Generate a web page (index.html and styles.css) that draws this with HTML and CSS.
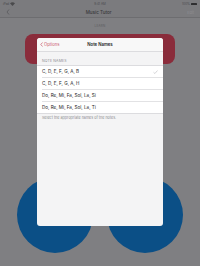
FILE: index.html
```html
<!DOCTYPE html>
<html>
<head>
<meta charset="utf-8">
<link rel="stylesheet" href="styles.css">
</head>
<body>
<div class="screen">
  <div class="status">
    <span class="st-left">iPad <svg class="wifi" width="5" height="4" viewBox="0 0 10 8"><path d="M5 8 L0 2.5 Q5 -1.5 10 2.5 Z" fill="#4a4a4c"/></svg></span>
    <span class="st-time">9:41 AM</span>
    <span class="st-right">100% <span class="batt"></span></span>
  </div>
  <div class="nav">
    <svg class="back" width="4" height="6" viewBox="0 0 4 6"><path d="M3 0.5 L1 3 L3 5.5" stroke="#5a5a5e" stroke-width="0.8" fill="none"/></svg>
    <span class="nav-title">Music Tutor</span>
    <span class="nav-edit">Edit</span>
  </div>
  <div class="content">
    <div class="learn">LEARN</div>
    <div class="banner"></div>
    <div class="circles">
      <div class="circle"></div>
      <div class="circle"></div>
    </div>
  </div>

  <div class="sheet">
    <div class="sheet-head">
      <span class="sh-back"><svg width="3" height="5" viewBox="0 0 3 5"><path d="M2.5 0.5 L0.8 2.5 L2.5 4.5" stroke="#c9566a" stroke-width="0.7" fill="none"/></svg>Options</span>
      <span class="sh-title">Note Names</span>
    </div>
    <div class="sec-head">NOTE NAMES</div>
    <div class="list">
      <div class="row">C, D, E, F, G, A, B<svg class="check" width="5" height="4" viewBox="0 0 10 8"><path d="M1 4.5 L3.8 7 L9 1" stroke="#b8b8bc" stroke-width="1.2" fill="none"/></svg></div>
      <div class="row">C, D, E, F, G, A, H</div>
      <div class="row">Do, Re, Mi, Fa, Sol, La, Si</div>
      <div class="row">Do, Re, Mi, Fa, Sol, La, Ti</div>
    </div>
    <div class="sec-foot">Select the appropriate names of the notes.</div>
  </div>
</div>
</body>
</html>
```
FILE: styles.css
```css
html, body {
  margin: 0;
  padding: 0;
}
body {
  width: 200px;
  height: 266px;
  overflow: hidden;
  background: #7f7f82;
  font-family: Inter, "Liberation Sans", sans-serif;
}
.screen {
  position: relative;
  width: 200px;
  height: 266px;
}
.status {
  height: 7px;
  display: flex;
  align-items: center;
  justify-content: space-between;
  padding: 0 3px;
  font-size: 3px;
  color: #4a4a4d;
  background: #7b7b7e;
}
.st-left, .st-right {
  display: flex;
  align-items: center;
  gap: 1px;
  width: 20px;
}
.st-right {
  justify-content: flex-end;
}
.batt {
  display: inline-block;
  width: 6px;
  height: 2px;
  background: #2e2e30;
  border-radius: 0.5px;
}
.nav {
  height: 10px;
  display: flex;
  align-items: center;
  justify-content: space-between;
  padding: 0 6px;
  background: #7b7b7e;
  border-bottom: 0.5px solid #6d6d70;
}
.nav-title {
  font-size: 4.6px;
  color: #3a3a3c;
  font-weight: 500;
}
.nav-edit {
  font-size: 3.8px;
  color: #8e8e92;
}
.back {
  width: 4px;
}
.content {
  display: flex;
  flex-direction: column;
  align-items: center;
}
.learn {
  margin-top: 6px;
  font-size: 3px;
  letter-spacing: 0.2px;
  color: #5c5c5f;
  height: 4px;
  line-height: 4px;
}
.banner {
  margin-top: 5.5px;
  width: 150px;
  height: 30px;
  background: #8a2c3b;
  border-radius: 8px;
}
.circles {
  margin-top: 113px;
  display: flex;
  gap: 14px;
}
.circle {
  width: 76px;
  height: 76px;
  border-radius: 50%;
  background: #0b4f86;
}
.sheet {
  position: absolute;
  left: 37px;
  top: 38px;
  width: 126px;
  height: 188px;
  background: #f4f4f5;
  border-radius: 3px;
  overflow: hidden;
}
.sheet-head {
  height: 13px;
  position: relative;
  display: flex;
  align-items: center;
  justify-content: center;
  background: #f8f8f8;
  border-bottom: 0.5px solid #dcdcdf;
}
.sh-back {
  position: absolute;
  left: 3px;
  top: 0;
  height: 13px;
  display: flex;
  align-items: center;
  gap: 1px;
  font-size: 4.2px;
  color: #c9566a;
}
.sh-title {
  font-size: 4.3px;
  font-weight: 600;
  color: #1c1c1e;
}
.sec-head {
  padding: 7px 5px 2px;
  font-size: 3.5px;
  color: #8a8a8e;
  letter-spacing: 0.15px;
  line-height: 4px;
}
.list {
  background: #ffffff;
  border-top: 0.5px solid #dcdcdf;
  border-bottom: 0.5px solid #dcdcdf;
}
.row {
  height: 11px;
  margin-left: 5px;
  padding-right: 5px;
  display: flex;
  align-items: center;
  justify-content: space-between;
  font-size: 4.6px;
  color: #1c1c1e;
  border-bottom: 0.5px solid #e2e2e4;
}
.row:last-child {
  border-bottom: none;
}
.sec-foot {
  padding: 2px 5px;
  font-size: 3.7px;
  color: #8a8a8e;
  line-height: 4px;
}
```
